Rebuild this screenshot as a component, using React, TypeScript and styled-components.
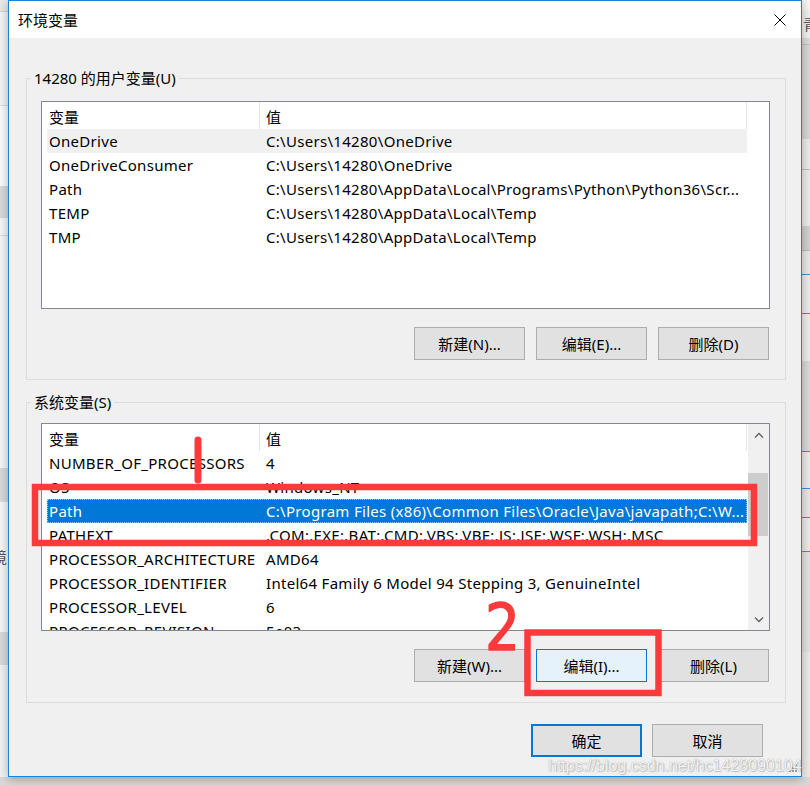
import React from 'react';
import styled, { createGlobalStyle } from 'styled-components';

const GlobalStyle = createGlobalStyle`
  html, body {
    margin: 0;
    padding: 0;
  }
  body {
    width: 810px;
    height: 785px;
    overflow: hidden;
    background: #d9d9d9;
    font-family: "Noto Sans", "Noto Sans CJK SC", sans-serif;
    font-size: 15px;
    color: #000;
  }
  * {
    box-sizing: border-box;
  }
`;

const Screen = styled.div`
  position: relative;
  display: flex;
  width: 810px;
  height: 785px;
  background: #d9d9d9;
`;

const Backdrop = styled.div`
  display: flex;
  flex-direction: column;
  width: 8px;
  height: 777px;
  overflow: hidden;
  background: #f2f2f2;
`;

const Strip = styled.div<{ $h: number; $bg: string; $line?: string }>`
  flex: none;
  height: ${p => p.$h}px;
  background: ${p => p.$bg};
  border-bottom: ${p => (p.$line ? `1px solid ${p.$line}` : 'none')};
  overflow: hidden;
  white-space: nowrap;
  font-size: 15px;
  line-height: ${p => p.$h}px;
  color: #333;
`;

const PeekText = styled.span<{ $shift: number }>`
  display: inline-block;
  margin-left: ${p => p.$shift}px;
  color: #555;
`;

const Dialog = styled.div`
  position: relative;
  z-index: 1;
  display: flex;
  flex-direction: column;
  flex: none;
  width: 794px;
  height: 777px;
  border: 1px solid #1883d7;
  background: #f0f0f0;
  box-shadow: 0 2px 10px rgba(0, 0, 0, 0.3);
`;

const TitleBar = styled.div`
  display: flex;
  align-items: center;
  justify-content: space-between;
  height: 37px;
  padding-left: 9px;
  background: #fff;
`;

const Title = styled.span`
  line-height: 20px;
`;

const CloseButton = styled.div`
  display: flex;
  align-items: center;
  justify-content: center;
  width: 42px;
  height: 37px;
`;

const Body = styled.div`
  display: flex;
  flex-direction: column;
  padding: 30px 15px 0 17px;
`;

const GroupBox = styled.fieldset<{ $gap?: number }>`
  margin: ${p => p.$gap || 0}px 0 0 0;
  min-width: 0;
  border: 1px solid #dcdcdc;
  padding: 0;
`;

const GroupInner = styled.div<{ $top: number; $bottom: number }>`
  padding: ${p => p.$top}px 15px ${p => p.$bottom}px 14px;
`;

const Legend = styled.legend`
  margin-left: 4px;
  padding: 0 3px;
  line-height: 20px;
`;

const ListView = styled.div`
  display: flex;
  height: 208px;
  border: 1px solid #828790;
  background: #fff;
  overflow: hidden;
`;

const ListBody = styled.div`
  flex: 1;
  min-width: 0;
  padding-left: 5px;
  overflow: hidden;
`;

const HeaderRow = styled.div`
  display: flex;
  width: 700px;
  height: 27px;
`;

const HeaderCell = styled.div<{ $w: number; $pad: number }>`
  width: ${p => p.$w}px;
  height: 27px;
  padding: 3px 0 0 ${p => p.$pad}px;
  line-height: 24px;
  border-right: 1px solid #e5e5e5;
`;

const Row = styled.div<{ $state?: 'selected' | 'hover' }>`
  display: flex;
  width: 700px;
  height: 24px;
  line-height: 24px;
  letter-spacing: 0.3px;
  white-space: nowrap;
  background: ${p =>
    p.$state === 'selected' ? '#0078d7' : p.$state === 'hover' ? '#f0f0f0' : 'transparent'};
  color: ${p => (p.$state === 'selected' ? '#fff' : '#000')};
  outline: ${p => (p.$state === 'selected' ? '1px dotted #9cc6ee' : 'none')};
  outline-offset: -1px;
`;

const NameCell = styled.div`
  flex: none;
  width: 219px;
  padding-left: 2px;
  overflow: hidden;
`;

const ValueCell = styled.div`
  flex: 1;
  min-width: 0;
  padding-right: 2px;
  overflow: hidden;
  text-overflow: ellipsis;
`;

const ScrollBar = styled.div`
  display: flex;
  flex-direction: column;
  flex: none;
  width: 21px;
  background: #f0f0f0;
`;

const ScrollArrow = styled.div`
  display: flex;
  align-items: center;
  justify-content: center;
  height: 21px;
`;

const ScrollTrack = styled.div`
  flex: 1;
  padding: 28px 1px 0 0;
`;

const Thumb = styled.div`
  height: 63px;
  background: #cdcdcd;
`;

const ButtonRow = styled.div<{ $gap: number; $right: number; $top: number }>`
  display: flex;
  justify-content: flex-end;
  gap: ${p => p.$gap}px;
  margin-top: ${p => p.$top}px;
  padding-right: ${p => p.$right}px;
`;

const Button = styled.button<{ $variant?: 'focused' | 'default' }>`
  width: 111px;
  height: 33px;
  padding: 0;
  margin: 0;
  font-family: inherit;
  font-size: 15px;
  color: #000;
  background: ${p => (p.$variant === 'focused' ? '#e5f1fb' : '#e1e1e1')};
  border: ${p =>
    p.$variant === 'default'
      ? '2px solid #0078d7'
      : p.$variant === 'focused'
        ? '1px solid #0078d7'
        : '1px solid #adadad'};
  border-radius: 0;
`;

const Annotations = styled.svg`
  position: absolute;
  left: 0;
  top: 0;
  z-index: 2;
  pointer-events: none;
`;

const Watermark = styled.div`
  position: absolute;
  left: 548px;
  top: 758px;
  z-index: 3;
  font-family: "Liberation Sans", Arial, sans-serif;
  font-size: 16px;
  line-height: 1;
  color: rgba(255, 255, 255, 0.9);
  text-shadow: 0 0 1px rgba(110, 110, 110, 0.7), 1px 1px 1px rgba(150, 150, 150, 0.45);
  white-space: nowrap;
`;

const Grip = styled.svg`
  position: absolute;
  right: 3px;
  bottom: 2px;
  z-index: 2;
`;

type Variable = { name: string; value: string; state?: 'selected' | 'hover' };

const userVars: Variable[] = [
  { name: 'OneDrive', value: 'C:\\Users\\14280\\OneDrive', state: 'hover' },
  { name: 'OneDriveConsumer', value: 'C:\\Users\\14280\\OneDrive' },
  { name: 'Path', value: 'C:\\Users\\14280\\AppData\\Local\\Programs\\Python\\Python36\\Scr...' },
  { name: 'TEMP', value: 'C:\\Users\\14280\\AppData\\Local\\Temp' },
  { name: 'TMP', value: 'C:\\Users\\14280\\AppData\\Local\\Temp' },
];

const systemVars: Variable[] = [
  { name: 'NUMBER_OF_PROCESSORS', value: '4' },
  { name: 'OS', value: 'Windows_NT' },
  {
    name: 'Path',
    value: 'C:\\Program Files (x86)\\Common Files\\Oracle\\Java\\javapath;C:\\W...',
    state: 'selected',
  },
  { name: 'PATHEXT', value: '.COM;.EXE;.BAT;.CMD;.VBS;.VBE;.JS;.JSE;.WSF;.WSH;.MSC' },
  { name: 'PROCESSOR_ARCHITECTURE', value: 'AMD64' },
  { name: 'PROCESSOR_IDENTIFIER', value: 'Intel64 Family 6 Model 94 Stepping 3, GenuineIntel' },
  { name: 'PROCESSOR_LEVEL', value: '6' },
  { name: 'PROCESSOR_REVISION', value: '5e03' },
];

const Chevron: React.FC<{ up?: boolean }> = ({ up }) => (
  <svg width="10" height="6" viewBox="0 0 10 6">
    <path
      d={up ? 'M1 5.5 L5 1.5 L9 5.5' : 'M1 0.5 L5 4.5 L9 0.5'}
      fill="none"
      stroke="#606060"
      strokeWidth="1.3"
    />
  </svg>
);

const VarList: React.FC<{ vars: Variable[]; scroll?: boolean }> = ({ vars, scroll }) => (
  <ListView>
    <ListBody>
      <HeaderRow>
        <HeaderCell $w={213} $pad={2}>变量</HeaderCell>
        <HeaderCell $w={487} $pad={6}>值</HeaderCell>
      </HeaderRow>
      {vars.map(v => (
        <Row key={v.name} $state={v.state}>
          <NameCell>{v.name}</NameCell>
          <ValueCell>{v.value}</ValueCell>
        </Row>
      ))}
    </ListBody>
    {scroll && (
      <ScrollBar>
        <ScrollArrow>
          <Chevron up />
        </ScrollArrow>
        <ScrollTrack>
          <Thumb />
        </ScrollTrack>
        <ScrollArrow>
          <Chevron />
        </ScrollArrow>
      </ScrollBar>
    )}
  </ListView>
);

const App: React.FC = () => (
  <Screen>
    <GlobalStyle />
    <Backdrop>
      <Strip $h={12} $bg="#e9e9e9" $line="#d2d2d2" />
      <Strip $h={94} $bg="#f4f4f4" $line="#dcdcdc" />
      <Strip $h={80} $bg="#fbfbfb" />
      <Strip $h={32} $bg="#dadada" />
      <Strip $h={18} $bg="#f7f7f7" $line="#dcdcdc" />
      <Strip $h={232} $bg="#f6f6f6" />
      <Strip $h={34} $bg="#dadada" />
      <Strip $h={44} $bg="#f7f7f7" />
      <Strip $h={22} $bg="#f7f7f7">
        <PeekText $shift={-8}>境</PeekText>
      </Strip>
      <Strip $h={64} $bg="#f6f6f6" />
      <Strip $h={33} $bg="#dadada" />
      <Strip $h={114} $bg="#f3f3f3" />
    </Backdrop>

    <Dialog>
      <TitleBar>
        <Title>环境变量</Title>
        <CloseButton>
          <svg width="12" height="12" viewBox="0 0 12 12">
            <path d="M0.5 0.5 L11.5 11.5 M11.5 0.5 L0.5 11.5" stroke="#000" strokeWidth="1" />
          </svg>
        </CloseButton>
      </TitleBar>

      <Body>
        <GroupBox>
          <Legend>14280 的用户变量(U)</Legend>
          <GroupInner $top={13} $bottom={19}>
            <VarList vars={userVars} />
            <ButtonRow $gap={11} $right={1} $top={18}>
              <Button>新建(N)...</Button>
              <Button>编辑(E)...</Button>
              <Button>删除(D)</Button>
            </ButtonRow>
          </GroupInner>
        </GroupBox>

        <GroupBox $gap={12}>
          <Legend>系统变量(S)</Legend>
          <GroupInner $top={11} $bottom={20}>
            <VarList vars={systemVars} scroll />
            <ButtonRow $gap={11} $right={1} $top={18}>
              <Button>新建(W)...</Button>
              <Button $variant="focused">编辑(I)...</Button>
              <Button>删除(L)</Button>
            </ButtonRow>
          </GroupInner>
        </GroupBox>

        <ButtonRow $gap={10} $right={23} $top={21}>
          <Button $variant="default">确定</Button>
          <Button>取消</Button>
        </ButtonRow>
      </Body>

      <Grip width="12" height="10" viewBox="0 0 12 10">
        <rect x="9" y="0" width="2" height="2" fill="#9a9a9a" />
        <rect x="6" y="3" width="2" height="2" fill="#9a9a9a" />
        <rect x="9" y="3" width="2" height="2" fill="#9a9a9a" />
        <rect x="3" y="6" width="2" height="2" fill="#9a9a9a" />
        <rect x="6" y="6" width="2" height="2" fill="#9a9a9a" />
        <rect x="9" y="6" width="2" height="2" fill="#9a9a9a" />
      </Grip>
    </Dialog>

    <Backdrop>
      <Strip $h={10} $bg="#f6f6f6" />
      <Strip $h={28} $bg="#f2f2f2">
        <PeekText $shift={1}>青</PeekText>
      </Strip>
      <Strip $h={7} $bg="#dcdcdc" $line="#c4c4c4" />
      <Strip $h={94} $bg="#d8d8d8" />
      <Strip $h={31} $bg="#ececec" $line="#c0c0c0" />
      <Strip $h={56} $bg="#ededed" />
      <Strip $h={25} $bg="#d2d2d2" $line="#bdbdbd" />
      <Strip $h={24} $bg="#e9e9e9" $line="#3c8ee0" />
      <Strip $h={39} $bg="#ececec" $line="#3c8ee0" />
      <Strip $h={47} $bg="#eeeeee" />
      <Strip $h={91} $bg="#dadada" $line="#3c8ee0" />
      <Strip $h={37} $bg="#ececec" $line="#3c8ee0" />
      <Strip $h={29} $bg="#e8e8e8" $line="#3c8ee0" />
      <Strip $h={34} $bg="#ececec" $line="#3c8ee0" />
      <Strip $h={100} $bg="#e4e4e4" />
      <Strip $h={175} $bg="#ececec" />
    </Backdrop>

    <Annotations width="810" height="785" viewBox="0 0 810 785">
      <rect x="35" y="487" width="719" height="56" fill="none" stroke="#fb3a3c" strokeWidth="6.5" />
      <line x1="198" y1="440" x2="198" y2="480" stroke="#fb3a3c" strokeWidth="7" strokeLinecap="round" />
      <rect x="527.5" y="632.5" width="131" height="60.5" fill="none" stroke="#fb3a3c" strokeWidth="6.5" />
      <text
        x="0"
        y="0"
        transform="translate(485 650) scale(0.86 1)"
        fontFamily="DejaVu Sans, sans-serif"
        fontSize="64"
        fill="#fb3a3c"
        stroke="#fb3a3c"
        strokeWidth="1.5"
        strokeLinejoin="round"
      >
        2
      </text>
    </Annotations>

    <Watermark>https://blog.csdn.net/hc1428090104</Watermark>
  </Screen>
);

export default App;
